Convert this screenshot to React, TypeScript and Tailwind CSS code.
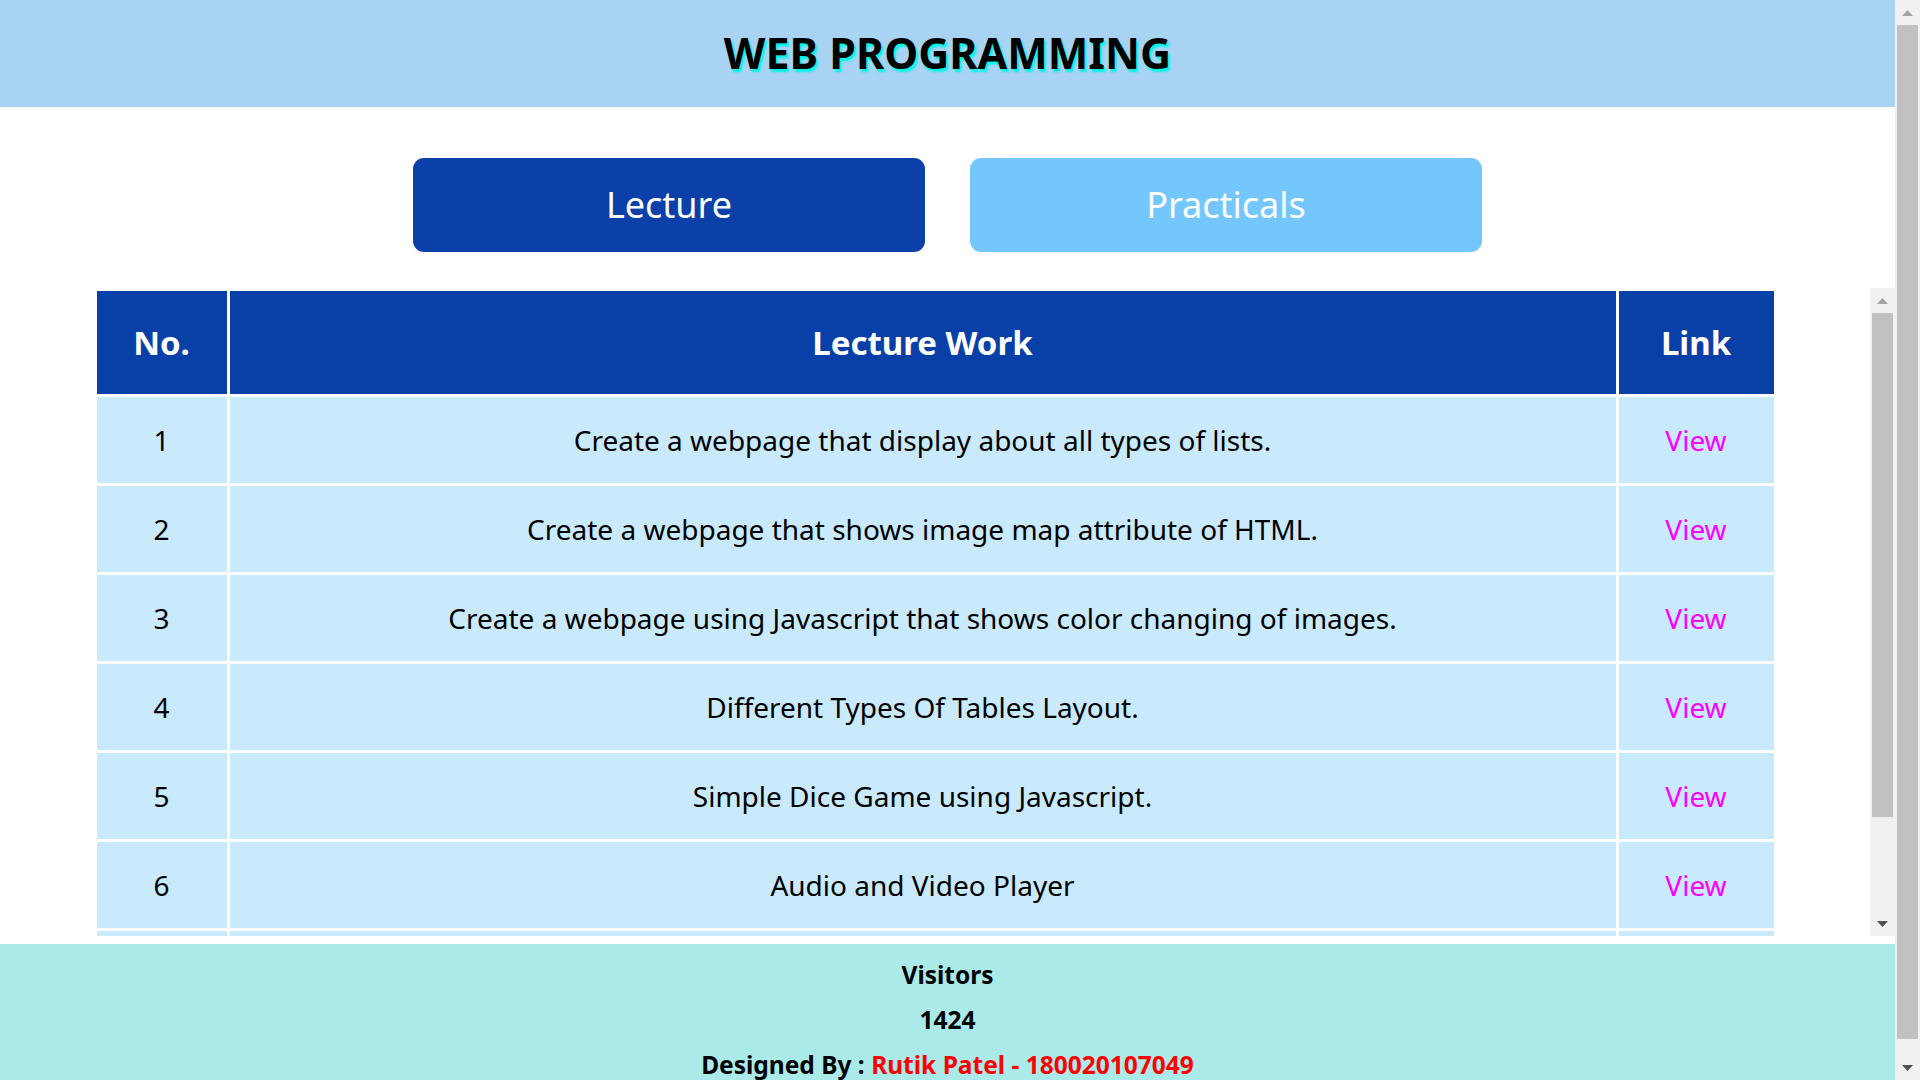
import React from "react";

const rows = [
  "Create a webpage that display about all types of lists.",
  "Create a webpage that shows image map attribute of HTML.",
  "Create a webpage using Javascript that shows color changing of images.",
  "Different Types Of Tables Layout.",
  "Simple Dice Game using Javascript.",
  "Audio and Video Player",
  "Form Validation using Javascript.",
];

function ScrollBar({ thumb, full }: { thumb: number; full?: boolean }) {
  return (
    <div className={`flex w-[25px] shrink-0 flex-col bg-[#f1f1f1] ${full ? "h-full" : ""}`}>
      <div className="flex h-[25px] shrink-0 items-center justify-center">
        <svg width="11" height="6" viewBox="0 0 11 6">
          <path d="M5.5 0 L11 6 L0 6 Z" fill="#a3a3a3" />
        </svg>
      </div>
      <div className="flex min-h-0 flex-1 flex-col">
        <div className="mx-[2px] shrink-0 bg-[#c1c1c1]" style={{ height: thumb }} />
      </div>
      <div className="flex h-[25px] shrink-0 items-center justify-center">
        <svg width="11" height="6" viewBox="0 0 11 6">
          <path d="M0 0 L11 0 L5.5 6 Z" fill="#505050" />
        </svg>
      </div>
    </div>
  );
}

export default function App() {
  return (
    <div
      className="flex h-screen w-full overflow-hidden bg-white"
      style={{ fontFamily: '"Noto Sans", sans-serif' }}
    >
      <div className="flex min-w-0 flex-1 flex-col overflow-hidden">
        <header className="flex h-[107px] shrink-0 items-center justify-center bg-[#a8d3f2]">
          <h1 className="-mt-[3px] text-[43px] font-bold leading-none text-black [text-shadow:2px_3px_2px_#00f5e8]">
            WEB PROGRAMMING
          </h1>
        </header>

        <div className="flex shrink-0 justify-center gap-[45px] pt-[51px] pb-[36px]">
          <button className="flex h-[94px] w-[512px] items-center justify-center rounded-[11px] bg-[#0a40a8] text-[36px] text-white">
            Lecture
          </button>
          <button className="flex h-[94px] w-[512px] items-center justify-center rounded-[11px] bg-[#74c7fd] text-[36px] text-white">
            Practicals
          </button>
        </div>

        <div className="flex h-[648px] shrink-0">
          <div className="min-w-0 flex-1 overflow-hidden">
            <table className="mx-auto w-[90%] border-separate border-spacing-[3px]">
              <thead>
                <tr className="h-[103px] bg-[#0940a7] text-white">
                  <th className="w-[130px] text-[33px] font-bold">No.</th>
                  <th className="text-[33px] font-bold">Lecture Work</th>
                  <th className="w-[155px] text-[33px] font-bold">Link</th>
                </tr>
              </thead>
              <tbody>
                {rows.map((r, i) => (
                  <tr key={i} className="h-[86px] bg-[#c9e9fd] text-[28px] text-black">
                    <td className="text-center">{i + 1}</td>
                    <td className="text-center">{r}</td>
                    <td className="text-center">
                      <a className="text-[#ff00ff]" href="#">
                        View
                      </a>
                    </td>
                  </tr>
                ))}
              </tbody>
            </table>
          </div>
          <ScrollBar thumb={504} />
        </div>

        <div className="h-[8px] shrink-0" />

        <footer className="flex h-[153px] shrink-0 flex-col items-center bg-[#aaebea] pt-[8px] text-[24.5px] font-bold leading-[45px] text-black">
          <div>Visitors</div>
          <div>1424</div>
          <div>
            Designed By : <span className="text-[#ff0000]">Rutik Patel - 180020107049</span>
          </div>
        </footer>
      </div>
      <ScrollBar thumb={1014} full />
    </div>
  );
}
